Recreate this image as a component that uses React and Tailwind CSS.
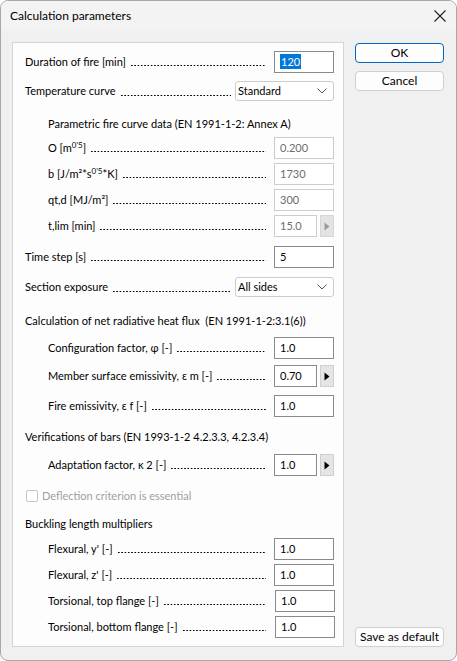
import React from 'react';

function Field({ value, disabled, selected, short }) {
  return (
    <div
      className={`h-[22px] ${short ? 'w-[43px]' : 'w-[60px]'} bg-white border pl-[5px] pt-[1px] leading-[17px] ${
        disabled ? 'border-[#cccccc] text-[#6d6d6d]' : 'border-[#8a8a8a] text-black'
      }`}
    >
      {selected ? <span className="bg-[#0078d7] text-white px-[1px] py-[1px]">{value}</span> : value}
    </div>
  );
}

function Spin({ disabled }) {
  return (
    <div
      className={`ml-[3px] w-[14px] h-[22px] flex items-center justify-center border ${
        disabled ? 'bg-[#e3e3e3] border-[#d6d6d6]' : 'bg-[#e5e5e5] border-[#cfcfcf]'
      }`}
    >
      <svg width="6" height="9" viewBox="0 0 6 9">
        <path d="M0.5 0.5 L5.5 4.5 L0.5 8.5 Z" fill={disabled ? '#9a9a9a' : '#000'} />
      </svg>
    </div>
  );
}

function Select({ value }) {
  return (
    <div className="w-[99px] h-[20px] bg-white border border-[#cccccc] rounded-[3px] flex items-center justify-between pl-[2px] pr-[6px]">
      <span>{value}</span>
      <svg width="10" height="6" viewBox="0 0 10 6">
        <path d="M0.5 0.5 L5 5 L9.5 0.5" fill="none" stroke="#555" strokeWidth="1" />
      </svg>
    </div>
  );
}

// dotted leader between label and input
function Leader({ gap, low }) {
  return (
    <div
      className={`flex-1 h-[1.4px] self-end ml-[5px] ${gap} ${low ? 'mb-[6px]' : 'mb-[7px]'} bg-[linear-gradient(to_right,#000_1.3px,transparent_1.3px)] bg-[length:3.3px_1.4px] bg-repeat-x`}
    />
  );
}

function Row({ label, indent, className = '', gap = 'mr-[8px]', low, children }) {
  return (
    <div className={`flex items-center h-[22px] ${indent ? 'pl-[35px]' : 'pl-[12px]'} ${className}`}>
      <span className="whitespace-nowrap">{label}</span>
      <Leader gap={gap} low={low} />
      {children}
    </div>
  );
}

function Heading({ text, indent, className = '' }) {
  return (
    <div className={`h-[20px] flex items-center whitespace-nowrap ${indent ? 'pl-[35px]' : 'pl-[12px]'} ${className}`}>
      {text}
    </div>
  );
}

function DlgButton({ children, primary, className = '' }) {
  return (
    <div
      className={`w-[89px] h-[20px] flex items-center justify-center rounded-[4px] bg-[#fdfdfd] border ${
        primary ? 'border-[#0067c0]' : 'border-[#d0d0d0]'
      } ${className}`}
    >
      {children}
    </div>
  );
}

export default function App() {
  return (
    <div
      className="w-[457px] h-[661px] rounded-[8px] border border-[#a8a8a8] overflow-hidden bg-[#f0f0f0] text-[11px] text-black flex flex-col"
      style={{ fontFamily: 'Lato, "Noto Sans", sans-serif' }}
    >
      {/* Title bar */}
      <div className="h-[30px] bg-[#f3f3f3] flex items-center justify-between pl-[9px] pr-[10px] shrink-0">
        <span className="text-[12px]">Calculation parameters</span>
        <svg width="12" height="12" viewBox="0 0 12 12">
          <path d="M0.5 0.5 L11.5 11.5 M11.5 0.5 L0.5 11.5" stroke="#222" strokeWidth="1.1" />
        </svg>
      </div>

      <div className="flex flex-1 pt-[11px] pl-[11px] pr-[12px] pb-[13px]">
        {/* Parameter panel */}
        <div className="w-[332px] bg-[#fdfdfd] border border-[#d5d5d5] pt-[8px] pr-[9px] flex flex-col">
          <Row label="Duration of fire [min]">
            <Field value="120" selected />
          </Row>
          <Row label="Temperature curve" className="mt-[7px] h-[21px]" gap="mr-[4px]" low>
            <Select value="Standard" />
          </Row>
          <Heading text="Parametric fire curve data (EN 1991-1-2: Annex A)" indent className="mt-[12px]" />
          <Row label={<>O [m<sup className="text-[8px]">0'5</sup>]</>} indent className="mt-[3px]">
            <Field value="0.200" disabled />
          </Row>
          <Row label={<>b [J/m&sup2;*s<sup className="text-[8px]">0'5</sup>*K]</>} indent className="mt-[4px]">
            <Field value="1730" disabled />
          </Row>
          <Row label="qt,d [MJ/m²]" indent className="mt-[4px]">
            <Field value="300" disabled />
          </Row>
          <Row label="t,lim [min]" indent className="mt-[4px]">
            <Field value="15.0" disabled short />
            <Spin disabled />
          </Row>
          <Row label="Time step [s]" className="mt-[9px]">
            <Field value="5" />
          </Row>
          <Row label="Section exposure" className="mt-[8px] h-[20px]" gap="mr-[4px]" low>
            <Select value="All sides" />
          </Row>
          <Heading text="Calculation of net radiative heat flux  (EN 1991-1-2:3.1(6))" className="mt-[13px] whitespace-pre" />
          <Row label="Configuration factor, φ [-]" indent className="mt-[6px]">
            <Field value="1.0" />
          </Row>
          <Row label="Member surface emissivity, ε m [-]" indent className="mt-[6px]">
            <Field value="0.70" short />
            <Spin />
          </Row>
          <Row label="Fire emissivity, ε f [-]" indent className="mt-[8px]">
            <Field value="1.0" />
          </Row>
          <Heading text="Verifications of bars (EN 1993-1-2 4.2.3.3, 4.2.3.4)" className="mt-[10px]" />
          <Row label="Adaptation factor, κ 2 [-]" indent className="mt-[7px]">
            <Field value="1.0" short />
            <Spin />
          </Row>
          <div className="mt-[10px] h-[20px] flex items-center pl-[13px] text-[#a0a0a0]">
            <div className="w-[12px] h-[12px] border border-[#c6c6c6] rounded-[2px] bg-white mr-[4px]" />
            <span>Deflection criterion is essential</span>
          </div>
          <Heading text="Buckling length multipliers" className="mt-[8px]" />
          <Row label="Flexural, y' [-]" indent className="mt-[4px]">
            <Field value="1.0" />
          </Row>
          <Row label="Flexural, z' [-]" indent className="mt-[4px]">
            <Field value="1.0" />
          </Row>
          <Row label="Torsional, top flange [-]" indent className="mt-[4px] -mr-[1px]" gap="mr-[9px]">
            <Field value="1.0" />
          </Row>
          <Row label="Torsional, bottom flange [-]" indent className="mt-[4px] -mr-[1px]" gap="mr-[9px]">
            <Field value="1.0" />
          </Row>
        </div>

        {/* Buttons */}
        <div className="flex flex-col ml-[11px] pt-[1px] text-[12px]">
          <DlgButton primary>OK</DlgButton>
          <DlgButton className="mt-[8px]">Cancel</DlgButton>
          <div className="flex-1" />
          <DlgButton>Save as default</DlgButton>
        </div>
      </div>
    </div>
  );
}
